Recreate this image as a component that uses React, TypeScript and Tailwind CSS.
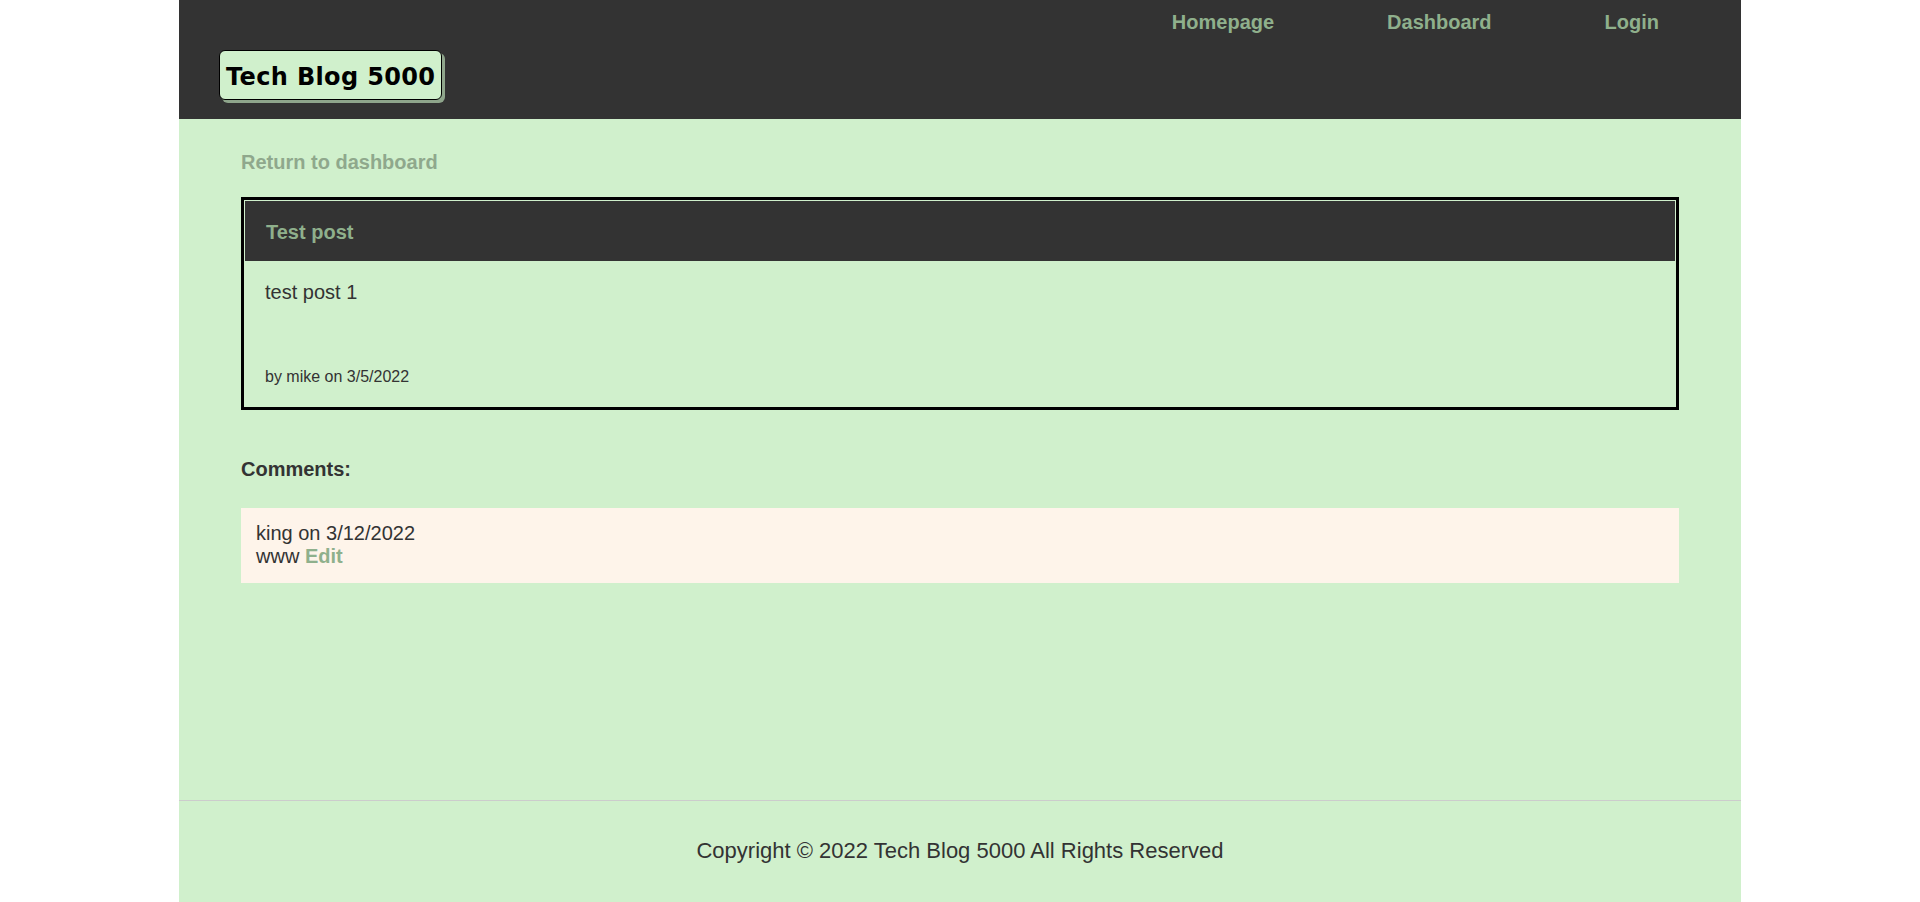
import React from "react";

const sans = { fontFamily: '"Liberation Sans", Arial, sans-serif' };

function Header() {
  return (
    <header className="bg-[#333333] pb-[19px]">
      <nav className="flex justify-end gap-[113px] pr-[82px] pt-[11px] leading-[23px]">
        <a href="#" className="text-[20px] font-bold text-[#8fb08c]">Homepage</a>
        <a href="#" className="text-[20px] font-bold text-[#8fb08c]">Dashboard</a>
        <a href="#" className="text-[20px] font-bold text-[#8fb08c]">Login</a>
      </nav>
      <div className="mt-[16px] pl-[40px]">
        <h1
          className="inline-block rounded-md border border-black bg-[#d0f0cc] pl-[6px] pr-[6px] pt-[12px] pb-[8px] text-[24px] font-bold leading-[28px] tracking-[0.35px] text-black shadow-[3px_3px_0_#8ea58b]"
          style={{ fontFamily: '"DejaVu Sans", Verdana, sans-serif' }}
        >
          Tech Blog 5000
        </h1>
      </div>
    </header>
  );
}

function PostCard() {
  return (
    <article className="border-[3px] border-black p-px">
      <div className="flex h-[60px] items-center bg-[#333333] pl-[21px] pt-[3px]">
        <h2 className="text-[20px] font-bold leading-[23px] text-[#8fb08c]">Test post</h2>
      </div>
      <div className="px-[20px] pt-[20px] pb-[20px]">
        <p className="text-[20px] leading-[23px]">test post 1</p>
        <p className="mt-[64px] text-[16px] leading-[18px]">by mike on 3/5/2022</p>
      </div>
    </article>
  );
}

function Comments() {
  return (
    <section className="mt-[48px]">
      <h3 className="text-[20px] font-bold leading-[23px]">Comments:</h3>
      <div className="mt-[27px] bg-[#fef4ea] px-[15px] pt-[14px] pb-[15px] text-[20px] leading-[23px]">
        <p>king on 3/12/2022</p>
        <p>
          www{" "}
          <a href="#" className="font-bold text-[#8fb08c]">Edit</a>
        </p>
      </div>
    </section>
  );
}

export default function App() {
  return (
    <div className="min-h-screen bg-white" style={sans}>
      <div className="mx-auto flex min-h-screen w-[1562px] flex-col bg-[#d0f0cc] text-[#333333]">
        <Header />
        <main className="flex-1 px-[62px] pt-[32px]">
          <a href="#" className="block text-[20px] font-bold leading-[23px] text-[#8fa88c]">
            Return to dashboard
          </a>
          <div className="mt-[23px]">
            <PostCard />
          </div>
          <Comments />
        </main>
        <footer className="border-t border-[#cccccc] pt-[37px] pb-[39px] text-center text-[22px] leading-[25px]">
          Copyright © 2022 Tech Blog 5000 All Rights Reserved
        </footer>
      </div>
    </div>
  );
}
